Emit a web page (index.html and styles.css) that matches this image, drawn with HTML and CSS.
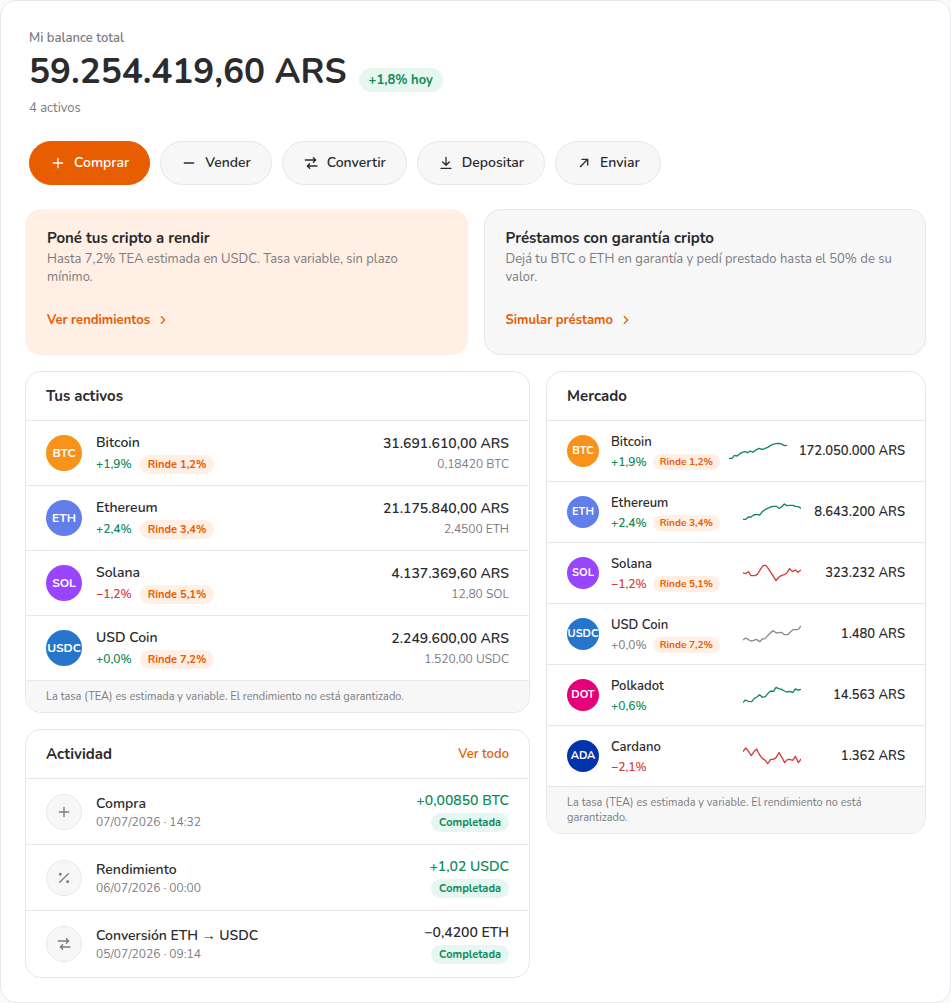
FILE: index.html
```html
<!DOCTYPE html>
<html lang="es">
<head>
<meta charset="utf-8">
<meta name="viewport" content="width=device-width, initial-scale=1">
<title>Mi balance</title>
<link rel="stylesheet" href="styles.css">
</head>
<body>
<svg class="sprite" aria-hidden="true">
  <symbol id="i-plus" viewBox="0 0 24 24"><path d="M12 5v14M5 12h14"/></symbol>
  <symbol id="i-minus" viewBox="0 0 24 24"><path d="M5 12h14"/></symbol>
  <symbol id="i-swap" viewBox="0 0 24 24"><path d="M3.500 7.500H19M15.500 4L19 7.500 15.500 11M21 16.500H6.500M10 13l-3.500 3.500L10 20"/></symbol>
  <symbol id="i-down" viewBox="0 0 24 24"><path d="M12 3.500V15.500M7 10.500l5 5 5-5M4.500 20h15"/></symbol>
  <symbol id="i-out" viewBox="0 0 24 24"><path d="M6.500 17.500l11-11M9 6.500h8.500V15"/></symbol>
  <symbol id="i-chevron" viewBox="0 0 24 24"><path d="M9 6l6 6-6 6"/></symbol>
  <symbol id="i-percent" viewBox="0 0 24 24"><path d="M5.500 18.500l13-13"/><circle cx="6.500" cy="6.500" r="1.200"/><circle cx="17.500" cy="17.500" r="1.200"/></symbol>
</svg>

<main class="wallet">
  <header class="balance">
    <p class="balance-label">Mi balance total</p>
    <div class="balance-row">
      <h1 class="balance-total">59.254.419,60 ARS</h1>
      <span class="today">+1,8% hoy</span>
    </div>
    <p class="balance-count">4 activos</p>
  </header>

  <div class="actions">
    <button class="btn btn-primary" type="button"><svg class="icon"><use href="#i-plus"/></svg>Comprar</button>
    <button class="btn" type="button"><svg class="icon"><use href="#i-minus"/></svg>Vender</button>
    <button class="btn" type="button"><svg class="icon"><use href="#i-swap"/></svg>Convertir</button>
    <button class="btn" type="button"><svg class="icon"><use href="#i-down"/></svg>Depositar</button>
    <button class="btn" type="button"><svg class="icon"><use href="#i-out"/></svg>Enviar</button>
  </div>

  <div class="promos">
    <section class="promo promo-earn">
      <h2 class="title">Poné tus cripto a rendir</h2>
      <p class="promo-text">Hasta 7,2% TEA estimada en USDC. Tasa variable, sin plazo mínimo.</p>
      <a class="promo-link" href="#rendimientos">Ver rendimientos<svg class="icon icon-sm"><use href="#i-chevron"/></svg></a>
    </section>
    <section class="promo">
      <h2 class="title">Préstamos con garantía cripto</h2>
      <p class="promo-text">Dejá tu BTC o ETH en garantía y pedí prestado hasta el 50% de su valor.</p>
      <a class="promo-link" href="#prestamo">Simular préstamo<svg class="icon icon-sm"><use href="#i-chevron"/></svg></a>
    </section>
  </div>

  <div class="columns">
    <div class="column">
      <section class="panel">
        <header class="panel-head"><h2 class="title">Tus activos</h2></header>
        <ul class="rows">
          <li class="row">
            <span class="coin btc">BTC</span>
            <div class="info"><p class="name">Bitcoin</p><p class="meta"><span class="pct up">+1,9%</span><span class="tag tag-earn">Rinde 1,2%</span></p></div>
            <div class="value"><p class="amount">31.691.610,00 ARS</p><p class="sub">0,18420 BTC</p></div>
          </li>
          <li class="row">
            <span class="coin eth">ETH</span>
            <div class="info"><p class="name">Ethereum</p><p class="meta"><span class="pct up">+2,4%</span><span class="tag tag-earn">Rinde 3,4%</span></p></div>
            <div class="value"><p class="amount">21.175.840,00 ARS</p><p class="sub">2,4500 ETH</p></div>
          </li>
          <li class="row">
            <span class="coin sol">SOL</span>
            <div class="info"><p class="name">Solana</p><p class="meta"><span class="pct down">−1,2%</span><span class="tag tag-earn">Rinde 5,1%</span></p></div>
            <div class="value"><p class="amount">4.137.369,60 ARS</p><p class="sub">12,80 SOL</p></div>
          </li>
          <li class="row">
            <span class="coin usdc">USDC</span>
            <div class="info"><p class="name">USD Coin</p><p class="meta"><span class="pct up">+0,0%</span><span class="tag tag-earn">Rinde 7,2%</span></p></div>
            <div class="value"><p class="amount">2.249.600,00 ARS</p><p class="sub">1.520,00 USDC</p></div>
          </li>
        </ul>
        <footer class="note">La tasa (TEA) es estimada y variable. El rendimiento no está garantizado.</footer>
      </section>

      <section class="panel">
        <header class="panel-head"><h2 class="title">Actividad</h2><a class="see-all" href="#actividad">Ver todo</a></header>
        <ul class="rows activity">
          <li class="row">
            <span class="kind"><svg class="icon"><use href="#i-plus"/></svg></span>
            <div class="info"><p class="name">Compra</p><p class="sub">07/07/2026 · 14:32</p></div>
            <div class="value"><p class="amount up">+0,00850 BTC</p><span class="tag tag-done">Completada</span></div>
          </li>
          <li class="row">
            <span class="kind"><svg class="icon"><use href="#i-percent"/></svg></span>
            <div class="info"><p class="name">Rendimiento</p><p class="sub">06/07/2026 · 00:00</p></div>
            <div class="value"><p class="amount up">+1,02 USDC</p><span class="tag tag-done">Completada</span></div>
          </li>
          <li class="row">
            <span class="kind"><svg class="icon"><use href="#i-swap"/></svg></span>
            <div class="info"><p class="name">Conversión ETH → USDC</p><p class="sub">05/07/2026 · 09:14</p></div>
            <div class="value"><p class="amount">−0,4200 ETH</p><span class="tag tag-done">Completada</span></div>
          </li>
        </ul>
      </section>
    </div>

    <section class="panel">
      <header class="panel-head"><h2 class="title">Mercado</h2></header>
      <ul class="rows market">
        <li class="row">
          <span class="coin btc">BTC</span>
          <div class="info"><p class="name">Bitcoin</p><p class="meta"><span class="pct up">+1,9%</span><span class="tag tag-earn">Rinde 1,2%</span></p></div>
          <svg class="spark up" viewBox="0 0 174 66"><polyline points="0,55 9,55 16,46 24,48 33,41 40,37 48,35 56,38 64,33 72,37 82,29 91,25 99,29 108,25 116,22 124,17 132,13 140,11 148,10 156,11 162,15 168,17 174,16"/></svg>
          <p class="price">172.050.000 ARS</p>
        </li>
        <li class="row">
          <span class="coin eth">ETH</span>
          <div class="info"><p class="name">Ethereum</p><p class="meta"><span class="pct up">+2,4%</span><span class="tag tag-earn">Rinde 3,4%</span></p></div>
          <svg class="spark up" viewBox="0 0 174 66"><polyline points="0,55 8,55 16,48 24,48 32,42 40,40 50,42 58,32 66,26 74,22 82,18 90,16 100,16 108,22 116,18 124,9 132,14 142,13 150,13 158,16 166,17 174,22"/></svg>
          <p class="price">8.643.200 ARS</p>
        </li>
        <li class="row">
          <span class="coin sol">SOL</span>
          <div class="info"><p class="name">Solana</p><p class="meta"><span class="pct down">−1,2%</span><span class="tag tag-earn">Rinde 5,1%</span></p></div>
          <svg class="spark down" viewBox="0 0 174 66"><polyline points="0,33 8,35 16,29 24,41 36,41 43,37 50,26 58,13 64,10 68,10 76,20 88,38 99,56 108,45 116,40 124,38 132,32 140,20 148,29 157,24 165,31 174,24"/></svg>
          <p class="price">323.232 ARS</p>
        </li>
        <li class="row">
          <span class="coin usdc">USDC</span>
          <div class="info"><p class="name">USD Coin</p><p class="meta"><span class="pct flat">+0,0%</span><span class="tag tag-earn">Rinde 7,2%</span></p></div>
          <svg class="spark flat" viewBox="0 0 174 66"><polyline points="0,51 8,45 16,50 24,54 32,52 40,49 50,56 58,48 66,47 74,38 84,28 91,23 100,30 108,29 116,28 124,35 134,35 142,27 150,20 158,20 166,19 174,9"/></svg>
          <p class="price">1.480 ARS</p>
        </li>
        <li class="row">
          <span class="coin dot">DOT</span>
          <div class="info"><p class="name">Polkadot</p><p class="meta"><span class="pct up">+0,6%</span></p></div>
          <svg class="spark up" viewBox="0 0 174 66"><polyline points="0,56 7,48 16,52 26,53 34,43 42,39 50,32 58,40 67,38 75,28 83,21 92,22 99,10 107,14 116,16 124,21 132,24 140,22 149,26 157,15 166,18 174,16"/></svg>
          <p class="price">14.563 ARS</p>
        </li>
        <li class="row">
          <span class="coin ada">ADA</span>
          <div class="info"><p class="name">Cardano</p><p class="meta"><span class="pct down">−2,1%</span></p></div>
          <svg class="spark down" viewBox="0 0 174 66"><polyline points="0,20 8,9 16,18 25,32 33,20 41,12 50,30 58,40 67,46 74,56 83,43 91,43 99,38 108,23 116,36 125,53 133,44 141,43 149,46 157,34 166,53 174,42"/></svg>
          <p class="price">1.362 ARS</p>
        </li>
      </ul>
      <footer class="note">La tasa (TEA) es estimada y variable. El rendimiento no está garantizado.</footer>
    </section>
  </div>
</main>
</body>
</html>
```
FILE: styles.css
```css
:root {
  --text: #2b2b2d;
  --muted: #7b7b80;
  --line: #e8e8ec;
  --soft: #f7f7f8;
  --orange: #e85d00;
  --orange-soft: #ffefe5;
  --green: #0f8a5a;
  --green-soft: #e6f7ef;
  --red: #d63b3b;
}

* { box-sizing: border-box; }

body {
  margin: 0;
  background: #fafafa;
  color: var(--text);
  font-family: Nunito, "Open Sans", sans-serif;
  font-size: 13px;
  line-height: 18px;
}

h1, h2, p, ul { margin: 0; padding: 0; }
ul { list-style: none; }
a { color: var(--orange); text-decoration: none; }

.sprite { display: block; width: 0; height: 0; }

.icon {
  flex: none;
  width: 16px;
  height: 16px;
  fill: none;
  stroke: currentColor;
  stroke-width: 2;
  stroke-linecap: round;
  stroke-linejoin: round;
}
.icon-sm { width: 14px; height: 14px; }

.wallet {
  padding: 24px;
  border: 1px solid var(--line);
  border-radius: 16px;
  background: #fff;
}

.balance { padding: 4px 4px 0; }
.balance-label, .balance-count { color: var(--muted); }
.balance-label { font-weight: 600; }
.balance-row {
  display: flex;
  align-items: flex-end;
  gap: 12px;
  margin: 2px 0 4px;
}
.balance-total {
  font-size: 35px;
  font-weight: 700;
  line-height: 46px;
}
.today {
  margin-bottom: 3px;
  padding: 3px 10px;
  border-radius: 12px;
  background: var(--green-soft);
  color: var(--green);
  font-weight: 700;
}

.actions {
  display: flex;
  flex-wrap: wrap;
  gap: 10px;
  padding: 24px 4px;
}
.btn {
  display: inline-flex;
  align-items: center;
  gap: 8px;
  height: 44px;
  padding: 0 20px;
  border: 1px solid var(--line);
  border-radius: 22px;
  background: var(--soft);
  color: var(--text);
  font: 600 14px/20px Nunito, "Open Sans", sans-serif;
}
.btn-primary {
  border-color: var(--orange);
  background: var(--orange);
  color: #fff;
}

.title {
  font-size: 15px;
  font-weight: 700;
  line-height: 20px;
}

.promos {
  display: grid;
  grid-template-columns: 1fr 1fr;
  gap: 16px;
}
.promo {
  padding: 18px 21px 12px;
  border: 1px solid var(--line);
  border-radius: 16px;
  background: var(--soft);
}
.promo-earn {
  border-color: var(--orange-soft);
  background: var(--orange-soft);
}
.promo-text { margin-top: 2px; color: var(--muted); }
.promo-link {
  display: inline-flex;
  align-items: center;
  gap: 6px;
  height: 44px;
  margin-top: 12px;
  font-weight: 700;
}

.columns {
  display: grid;
  grid-template-columns: minmax(0, 1fr) 380px;
  align-items: start;
  gap: 16px;
  margin-top: 16px;
}
.column {
  display: grid;
  gap: 16px;
}

.panel {
  overflow: hidden;
  border: 1px solid var(--line);
  border-radius: 16px;
}
.panel-head {
  display: flex;
  align-items: center;
  justify-content: space-between;
  padding: 14px 20px;
  border-bottom: 1px solid var(--line);
}
.see-all { font-weight: 600; }

.row {
  display: flex;
  align-items: center;
  gap: 14px;
  min-height: 65px;
  padding: 0 20px;
  border-bottom: 1px solid var(--line);
}
.coin, .kind {
  display: flex;
  flex: none;
  align-items: center;
  justify-content: center;
  width: 36px;
  height: 36px;
  border-radius: 50%;
}
.coin {
  color: #fff;
  font-size: 12px;
  font-weight: 700;
}
.kind {
  border: 1px solid var(--line);
  background: var(--soft);
  color: var(--muted);
}
.btc { background: #f7931a; }
.eth { background: #627eea; }
.sol { background: #9945ff; }
.usdc { background: #2775ca; }
.dot { background: #e6007a; }
.ada { background: #0033ad; }

.info { flex: 1; min-width: 0; }
.name { font-size: 14px; font-weight: 600; line-height: 20px; }
.meta { display: flex; align-items: center; gap: 8px; margin-top: 2px; }
.pct { font-size: 12px; font-weight: 600; }
.up { color: var(--green); }
.down { color: var(--red); }
.flat { color: #8a8a90; }

.tag {
  display: inline-block;
  padding: 2px 8px;
  border-radius: 10px;
  font-size: 11px;
  font-weight: 700;
  line-height: 15px;
  white-space: nowrap;
}
.tag-earn { background: var(--orange-soft); color: var(--orange); }
.tag-done { background: var(--green-soft); color: var(--green); }

.value {
  display: flex;
  flex-direction: column;
  align-items: flex-end;
  gap: 2px;
}
.amount { font-size: 14px; font-weight: 600; line-height: 20px; }
.sub { color: var(--muted); font-size: 12px; line-height: 16px; }

.activity .row { min-height: 66px; }
.activity .row:last-child { border-bottom-color: transparent; }

.market .row { gap: 12px; min-height: 61px; }
.market .coin { width: 32px; height: 32px; font-size: 11px; }
.market .name { font-size: 13px; }
.market .meta { gap: 6px; margin-top: 1px; }
.market .tag { padding: 1px 7px; font-size: 10px; line-height: 14px; }

.spark {
  flex: none;
  width: 58px;
  height: 22px;
  fill: none;
}
.spark polyline {
  stroke: currentColor;
  stroke-width: 4;
  stroke-linejoin: round;
}
.price {
  min-width: 92px;
  font-weight: 600;
  text-align: right;
}

.note {
  padding: 8px 20px;
  background: var(--soft);
  color: var(--muted);
  font-size: 11px;
  line-height: 15px;
}
```
